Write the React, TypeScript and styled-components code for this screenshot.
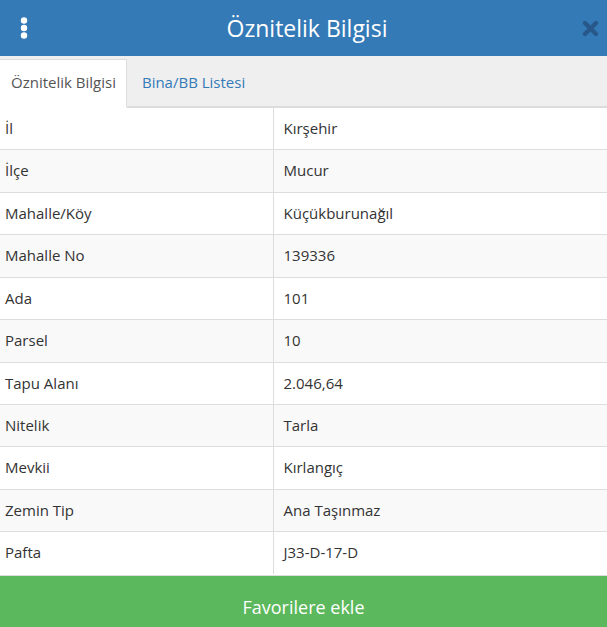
import React from 'react';
import styled, { createGlobalStyle } from 'styled-components';

const GlobalStyle = createGlobalStyle`
  * { box-sizing: border-box; }
  html, body {
    margin: 0;
    padding: 0;
    background: #fff;
    font-family: 'Open Sans', 'Noto Sans', sans-serif;
  }
`;

const Panel = styled.div`
  width: 607px;
  height: 627px;
  display: flex;
  flex-direction: column;
  overflow: hidden;
`;

const Header = styled.div`
  height: 56px;
  flex: none;
  background: #337ab7;
  display: flex;
  align-items: center;
  justify-content: space-between;
  padding: 0 7px 0 14px;
`;

const Title = styled.h1`
  margin: 0;
  flex: 1;
  text-align: center;
  color: #fff;
  font-size: 23px;
  font-weight: 400;
  line-height: 1;
`;

const IconButton = styled.button`
  width: 20px;
  height: 24px;
  padding: 0;
  border: 0;
  background: transparent;
  display: flex;
  align-items: center;
  justify-content: center;
  cursor: pointer;
`;

const Tabs = styled.div`
  height: 52px;
  flex: none;
  background: #efefef;
  border-bottom: 2px solid #dcdcdc;
  display: flex;
  align-items: flex-end;
`;

const Tab = styled.div<{ $active?: boolean }>`
  height: 49px;
  margin-bottom: -2px;
  padding: 0 10px 2px 11px;
  display: flex;
  align-items: center;
  font-size: 15px;
  color: ${(p) => (p.$active ? '#555' : '#337ab7')};
  background: ${(p) => (p.$active ? '#fff' : 'transparent')};
  border: 1px solid ${(p) => (p.$active ? '#ddd' : 'transparent')};
  border-bottom: 2px solid ${(p) => (p.$active ? '#fff' : 'transparent')};
  border-left: 0;
  margin-right: ${(p) => (p.$active ? '4px' : '0')};
`;

const Table = styled.table`
  width: 100%;
  border-collapse: collapse;
  font-size: 15px;
  color: #333;
  line-height: 1.42857;
`;

const Row = styled.tr<{ $striped: boolean; $first: boolean }>`
  background: ${(p) => (p.$striped ? '#f9f9f9' : '#fff')};

  td {
    border-top: ${(p) => (p.$first ? '0' : '1px solid #ddd')};
  }
`;

const Label = styled.td`
  width: 273px;
  padding: 10px 5px;
  border-right: 1px solid #ddd;
`;

const Value = styled.td`
  padding: 10px 10px;
`;

const AddButton = styled.button`
  margin-top: auto;
  height: 52px;
  flex: none;
  padding: 10px 0 0;
  border: 0;
  border-top: 1px solid #ddd;
  background: #5cb85c;
  color: #fff;
  font-family: inherit;
  font-size: 18px;
  cursor: pointer;
`;

const rows: [string, string][] = [
  ['İl', 'Kırşehir'],
  ['İlçe', 'Mucur'],
  ['Mahalle/Köy', 'Küçükburunağıl'],
  ['Mahalle No', '139336'],
  ['Ada', '101'],
  ['Parsel', '10'],
  ['Tapu Alanı', '2.046,64'],
  ['Nitelik', 'Tarla'],
  ['Mevkii', 'Kırlangıç'],
  ['Zemin Tip', 'Ana Taşınmaz'],
  ['Pafta', 'J33-D-17-D'],
];

export default function App() {
  return (
    <Panel>
      <GlobalStyle />
      <Header>
        <IconButton aria-label="menu">
          <svg width="8" height="22" viewBox="0 0 8 22">
            <circle cx="4" cy="3.5" r="3.2" fill="#fff" />
            <circle cx="4" cy="11" r="3.2" fill="#fff" />
            <circle cx="4" cy="18.5" r="3.2" fill="#fff" />
          </svg>
        </IconButton>
        <Title>Öznitelik Bilgisi</Title>
        <IconButton aria-label="close">
          <svg width="17" height="17" viewBox="0 0 17 17">
            <path
              d="M3 3 L14 14 M14 3 L3 14"
              stroke="#28588a"
              strokeWidth="4.4"
              strokeLinecap="round"
            />
          </svg>
        </IconButton>
      </Header>
      <Tabs>
        <Tab $active>Öznitelik Bilgisi</Tab>
        <Tab>Bina/BB Listesi</Tab>
      </Tabs>
      <Table>
        <tbody>
          {rows.map(([k, v], i) => (
            <Row key={k} $first={i === 0} $striped={i % 2 === 1}>
              <Label>{k}</Label>
              <Value>{v}</Value>
            </Row>
          ))}
        </tbody>
      </Table>
      <AddButton>Favorilere ekle</AddButton>
    </Panel>
  );
}
